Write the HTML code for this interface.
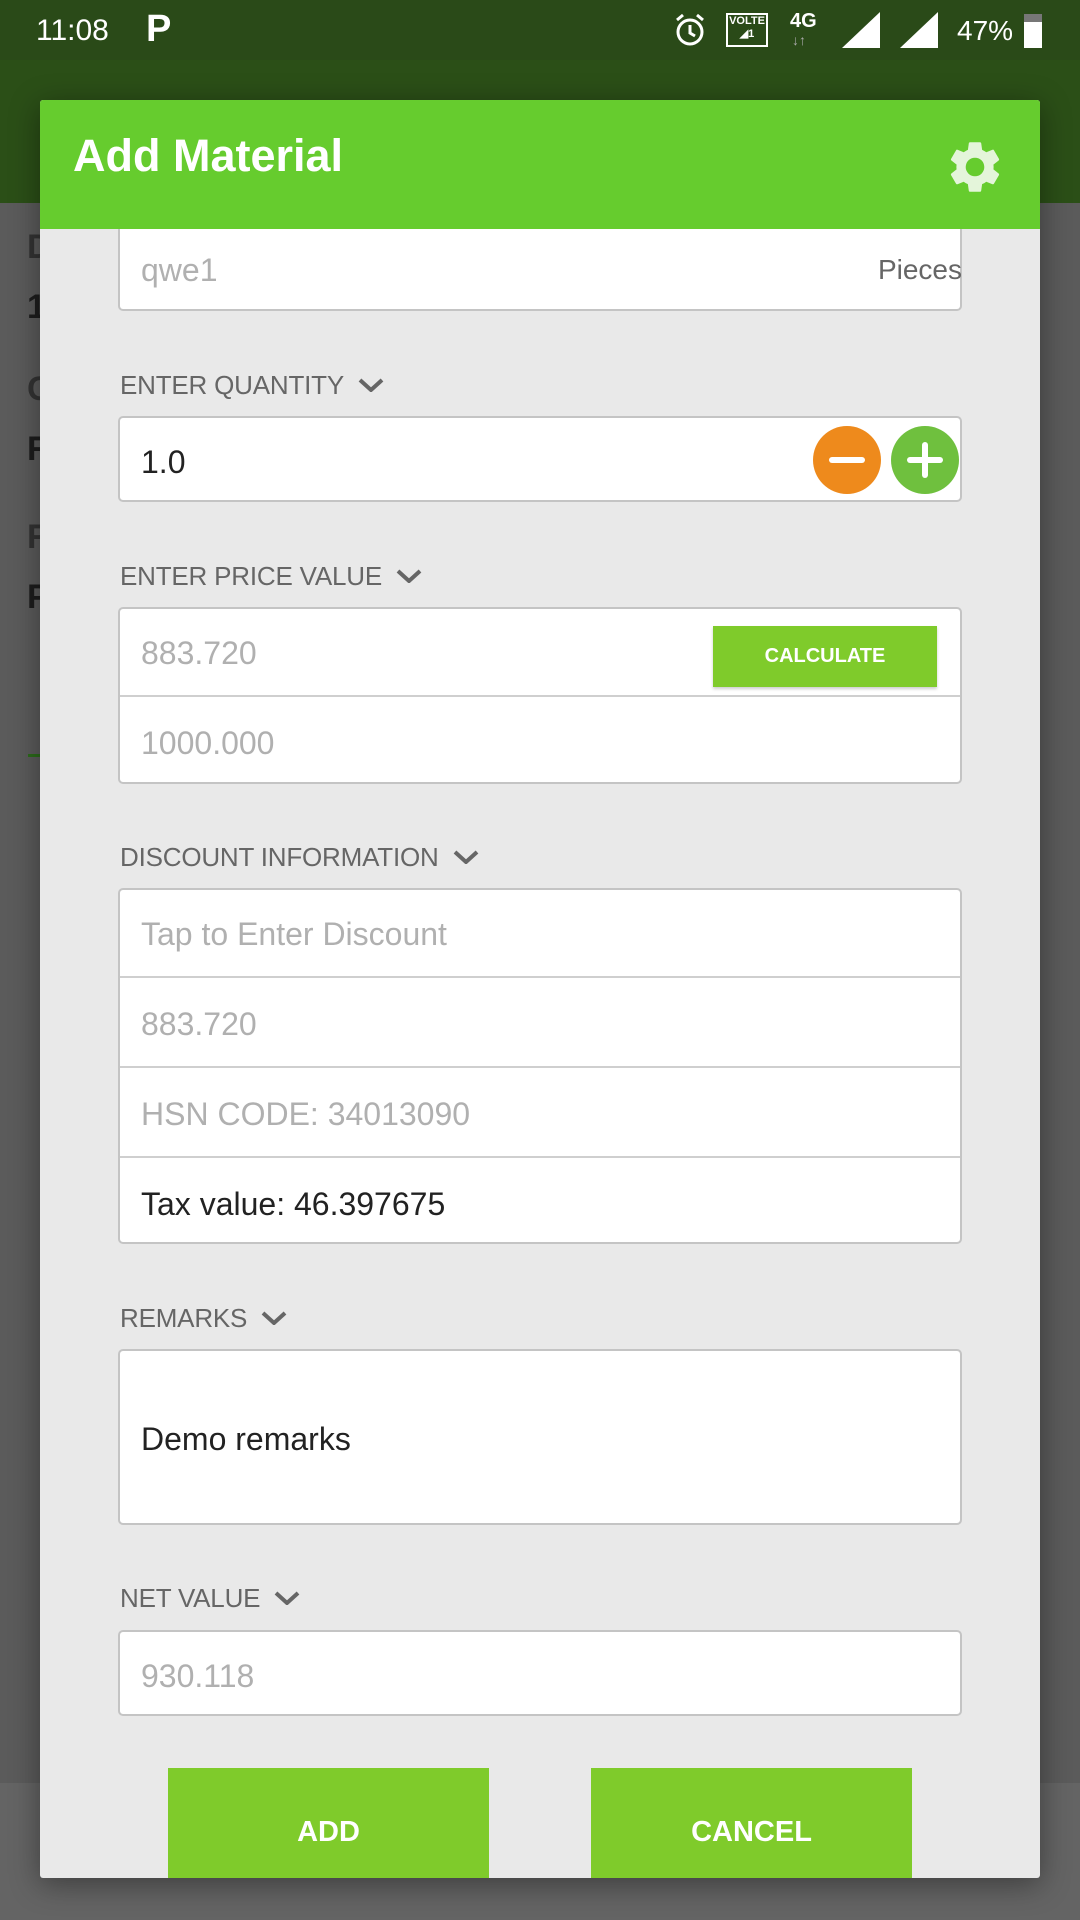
<!DOCTYPE html>
<html><head><meta charset="utf-8"><style>
*{margin:0;padding:0;box-sizing:border-box}
body{width:1080px;height:1920px;position:relative;overflow:hidden;background:#5b5b5b;font-family:"Liberation Sans",sans-serif}
.abs{position:absolute}
.sb{left:0;top:0;width:1080px;height:60px;background:#2a4a18;color:#fff}
.ab{left:0;top:60px;width:1080px;height:143px;background:#2b4f17}
.bgl{left:27px;font-weight:bold;font-size:34px;color:#1d1d1d}
.dlg{left:40px;top:100px;width:1000px;height:1778px;background:#e9e9e9;border-radius:3px;overflow:hidden;box-shadow:0 6px 30px rgba(0,0,0,.4)}
.hdr{left:0;top:0;width:1000px;height:129px;background:#66cc2e}
.box{left:78px;width:844px;background:#fff;border:2px solid #c4c4c4;border-radius:5px}
.lbl{left:80px;font-size:26px;color:#666;letter-spacing:-0.2px}
.lbl svg{margin-left:14px;vertical-align:2px}
.t{position:absolute;left:21px;font-size:32px;color:#b0b0b0}
.k{color:#222}
.div{position:absolute;left:0;width:100%;height:2px;background:#cfcfcf}
.btn{background:#7fcb2b;color:#fff;font-size:29px;text-align:center}
</style></head><body>
<div class="abs sb">
 <div class="abs" style="left:36px;top:14px;font-size:30px">11:08</div>
 <div class="abs" style="left:146px;top:8px;font-size:38px;font-weight:bold">P</div>
 <svg class="abs" style="left:672px;top:12px" width="36" height="36" viewBox="0 0 36 36"><circle cx="18" cy="20" r="12" fill="none" stroke="#fff" stroke-width="3"/><path d="M18 13v8l5 3M5 8l6-5M31 8l-6-5" stroke="#fff" stroke-width="3" fill="none"/></svg>
 <div class="abs" style="left:726px;top:13px;width:42px;height:34px;border:2px solid #fff;font-size:11px;text-align:center;font-weight:bold">VOLTE<br>◢1</div>
 <div class="abs" style="left:790px;top:10px;font-size:20px;font-weight:bold">4G</div>
 <div class="abs" style="left:792px;top:32px;font-size:14px;color:#aaa">↓↑</div>
 <svg class="abs" style="left:842px;top:12px" width="38" height="36"><path d="M0 36L38 0V36Z" fill="#fff"/></svg>
 <svg class="abs" style="left:900px;top:12px" width="38" height="36"><path d="M0 36L38 0V36Z" fill="#fff"/></svg>
 <div class="abs" style="left:957px;top:15px;font-size:28px">47%</div>
 <div class="abs" style="left:1024px;top:14px;width:18px;height:34px;background:#fff;border-top:8px solid #777"></div>
</div>
<div class="abs ab"></div>
<div class="abs" style="left:0;top:1783px;width:1080px;height:137px;background:#646464"></div>
<div class="abs bgl" style="top:228px;color:#333">D</div>
<div class="abs bgl" style="top:288px">1</div>
<div class="abs bgl" style="top:370px;color:#333">C</div>
<div class="abs bgl" style="top:430px">R</div>
<div class="abs bgl" style="top:518px;color:#333">R</div>
<div class="abs bgl" style="top:578px">P</div>
<div class="abs" style="left:28px;top:754px;width:14px;height:3px;background:#2b6b1a"></div>

<div class="abs dlg">
 <div class="abs box" style="top:120px;height:91px;border-top:none;border-radius:0 0 5px 5px">
  <div class="t" style="top:32px">qwe1</div>
  <div class="t" style="left:auto;right:-2px;top:34px;font-size:28px;color:#666">Pieces</div>
 </div>
 <div class="abs hdr">
  <div class="abs" style="left:33px;top:30px;font-size:45px;font-weight:bold;color:#fff">Add Material</div>
  <svg class="abs" style="left:904px;top:36px" width="62" height="62" viewBox="0 0 24 24"><path fill="#e4f5da" d="M19.14 12.94c.04-.3.06-.61.06-.94 0-.32-.02-.64-.07-.94l2.03-1.58a.49.49 0 0 0 .12-.61l-1.92-3.32a.49.49 0 0 0-.59-.22l-2.39.96c-.5-.38-1.03-.7-1.62-.94l-.36-2.54a.48.48 0 0 0-.48-.41h-3.84c-.24 0-.43.17-.47.41l-.36 2.54c-.59.24-1.130.57-1.62.94l-2.39-.96a.48.48 0 0 0-.59.22L2.74 8.87c-.12.21-.08.47.12.61l2.03 1.58c-.05.3-.09.63-.09.94s.02.64.07.94l-2.03 1.58a.49.49 0 0 0-.12.61l1.92 3.32c.12.22.37.29.59.22l2.39-.96c.5.38 1.03.7 1.62.94l.36 2.54c.05.24.24.41.48.41h3.84c.24 0 .44-.17.47-.41l.36-2.54c.59-.24 1.13-.56 1.62-.94l2.39.96c.22.08.47 0 .59-.22l1.92-3.32c.12-.22.07-.47-.12-.61l-2.01-1.58zM12 15.6A3.6 3.6 0 1 1 12 8.4a3.6 3.6 0 0 1 0 7.2z"/></svg>
 </div>

 <div class="abs lbl" style="top:270px">ENTER QUANTITY<svg width="26" height="14"><path d="M2 2l11 10 11-10" stroke="#666" stroke-width="4" fill="none"/></svg></div>
 <div class="abs box" style="top:316px;height:86px">
  <div class="t k" style="top:26px">1.0</div>
  <div class="abs" style="left:693px;top:8px;width:68px;height:68px;border-radius:50%;background:#ee8a1c"><div class="abs" style="left:16px;top:31px;width:36px;height:6px;background:#fff;border-radius:3px"></div></div>
  <div class="abs" style="left:771px;top:8px;width:68px;height:68px;border-radius:50%;background:#6fc03e"><div class="abs" style="left:16px;top:31px;width:36px;height:6px;background:#fff;border-radius:3px"></div><div class="abs" style="left:31px;top:16px;width:6px;height:36px;background:#fff;border-radius:3px"></div></div>
 </div>

 <div class="abs lbl" style="top:461px">ENTER PRICE VALUE<svg width="26" height="14"><path d="M2 2l11 10 11-10" stroke="#666" stroke-width="4" fill="none"/></svg></div>
 <div class="abs box" style="top:507px;height:177px">
  <div class="t" style="top:26px">883.720</div>
  <div class="abs btn" style="left:593px;top:17px;width:224px;height:61px;font-size:20px;font-weight:bold;line-height:61px;box-shadow:0 2px 3px rgba(0,0,0,.2)">CALCULATE</div>
  <div class="div" style="top:86px"></div>
  <div class="t" style="top:116px">1000.000</div>
 </div>

 <div class="abs lbl" style="top:742px">DISCOUNT INFORMATION<svg width="26" height="14"><path d="M2 2l11 10 11-10" stroke="#666" stroke-width="4" fill="none"/></svg></div>
 <div class="abs box" style="top:788px;height:356px">
  <div class="t" style="top:26px">Tap to Enter Discount</div>
  <div class="div" style="top:86px"></div>
  <div class="t" style="top:116px">883.720</div>
  <div class="div" style="top:176px"></div>
  <div class="t" style="top:206px">HSN CODE: 34013090</div>
  <div class="div" style="top:266px"></div>
  <div class="t k" style="top:296px">Tax value: 46.397675</div>
 </div>

 <div class="abs lbl" style="top:1203px">REMARKS<svg width="26" height="14"><path d="M2 2l11 10 11-10" stroke="#666" stroke-width="4" fill="none"/></svg></div>
 <div class="abs box" style="top:1249px;height:176px">
  <div class="t k" style="top:70px">Demo remarks</div>
 </div>

 <div class="abs lbl" style="top:1483px">NET VALUE<svg width="26" height="14"><path d="M2 2l11 10 11-10" stroke="#666" stroke-width="4" fill="none"/></svg></div>
 <div class="abs box" style="top:1530px;height:86px">
  <div class="t" style="top:26px">930.118</div>
 </div>

 <div class="abs btn" style="left:128px;top:1668px;width:321px;height:120px;line-height:128px;font-weight:bold">ADD</div>
 <div class="abs btn" style="left:551px;top:1668px;width:321px;height:120px;line-height:128px;font-weight:bold">CANCEL</div>
</div>
</body></html>
